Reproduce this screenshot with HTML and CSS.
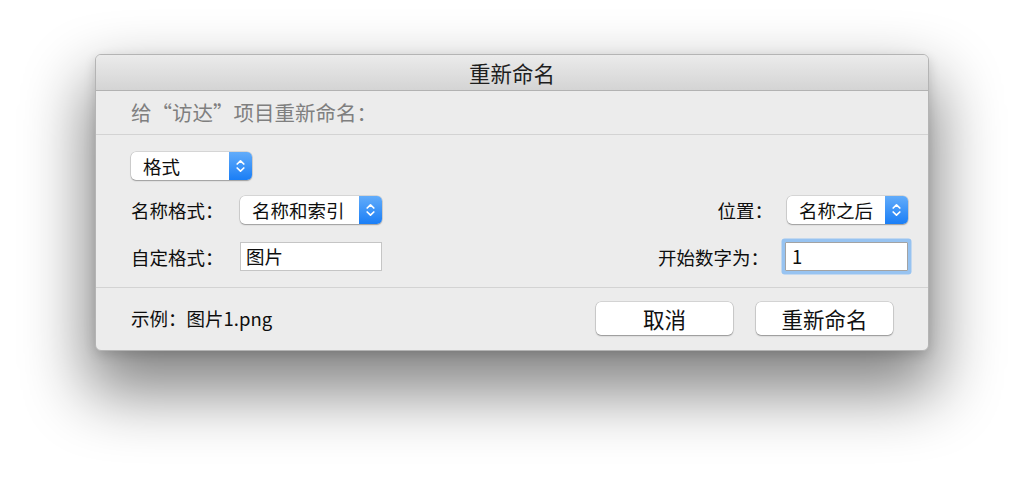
FILE: index.html
```html
<!DOCTYPE html>
<html lang="zh-CN">
<head>
<meta charset="utf-8">
<title>重新命名</title>
<link rel="stylesheet" href="styles.css">
</head>
<body>
<div class="window">
  <div class="titlebar">重新命名</div>
  <div class="header">给“访达”项目重新命名：</div>
  <div class="form">
    <div class="row">
      <div class="popup popup-format">
        <span class="popup-text">格式</span>
        <span class="popup-arrows"><svg width="9" height="14" viewBox="0 0 9 14"><path d="M1.2 5 L4.5 1.8 L7.8 5" /><path d="M1.2 9 L4.5 12.2 L7.8 9" /></svg></span>
      </div>
    </div>
    <div class="row split">
      <div class="group">
        <span class="label">名称格式：</span>
        <div class="popup popup-name">
          <span class="popup-text">名称和索引</span>
          <span class="popup-arrows"><svg width="9" height="14" viewBox="0 0 9 14"><path d="M1.2 5 L4.5 1.8 L7.8 5" /><path d="M1.2 9 L4.5 12.2 L7.8 9" /></svg></span>
        </div>
      </div>
      <div class="group right">
        <span class="label-r">位置：</span>
        <div class="popup popup-pos">
          <span class="popup-text">名称之后</span>
          <span class="popup-arrows"><svg width="9" height="14" viewBox="0 0 9 14"><path d="M1.2 5 L4.5 1.8 L7.8 5" /><path d="M1.2 9 L4.5 12.2 L7.8 9" /></svg></span>
        </div>
      </div>
    </div>
    <div class="row split">
      <div class="group">
        <span class="label">自定格式：</span>
        <div class="field field-custom">图片</div>
      </div>
      <div class="group right">
        <span class="label-r label-start">开始数字为：</span>
        <div class="field field-start focused">1</div>
      </div>
    </div>
  </div>
  <div class="footer">
    <span class="example">示例：图片1.png</span>
    <div class="buttons">
      <div class="btn">取消</div>
      <div class="btn">重新命名</div>
    </div>
  </div>
</div>
</body>
</html>
```

FILE: styles.css
```css
html, body {
  margin: 0;
  padding: 0;
  background: #ffffff;
}
body {
  width: 1024px;
  height: 487px;
  overflow: hidden;
  font-family: "Noto Sans CJK SC", "Noto Sans", sans-serif;
  font-weight: 400;
  color: #0e0e0e;
}
.window {
  margin: 54px 0 0 95px;
  width: 834px;
  height: 297px;
  box-sizing: border-box;
  background: #ececec;
  border-radius: 6px;
  border: 1px solid #b4b4b4;
  box-shadow: 0 34px 64px 8px rgba(0, 0, 0, 0.48), 0 4px 12px rgba(0,0,0,0.14);
  display: flex;
  flex-direction: column;
  overflow: hidden;
}
.titlebar {
  height: 36px;
  box-sizing: border-box;
  background: linear-gradient(#ebebeb, #d4d4d4);
  border-bottom: 1px solid #b2b2b2;
  text-align: center;
  font-size: 21.5px;
  line-height: 36px;
  color: #1e1e1e;
}
.header {
  height: 44px;
  box-sizing: border-box;
  border-bottom: 1px solid #d3d3d3;
  padding-left: 35px;
  font-size: 20.5px;
  line-height: 42px;
  color: #7f7f7f;
}
.form {
  height: 153px;
  box-sizing: border-box;
  border-bottom: 1px solid #d3d3d3;
  padding: 17px 20px 0 35px;
  display: flex;
  flex-direction: column;
  gap: 16px;
}
.row {
  display: flex;
  align-items: center;
}
.row.split {
  justify-content: space-between;
}
.row.split + .row.split {
  margin-top: 2px;
}
.group {
  display: flex;
  align-items: center;
}
.label {
  width: 109px;
  font-size: 18.5px;
}
.label-r {
  font-size: 18.5px;
  margin-right: 14px;
}
.label-start {
  margin-right: 16px;
}
.popup {
  height: 28px;
  box-sizing: border-box;
  background: #ffffff;
  border-radius: 5px;
  box-shadow: 0 0 0 0.5px rgba(0,0,0,0.18), 0 1px 1.5px rgba(0,0,0,0.28);
  display: flex;
  align-items: stretch;
  overflow: hidden;
  font-size: 18.5px;
}
.popup-text {
  flex: 1;
  padding-left: 12px;
  line-height: 28px;
}
.popup-arrows {
  width: 23px;
  background: linear-gradient(#62acfa, #1a7ef6);
  display: flex;
  align-items: center;
  justify-content: center;
}
.popup-arrows svg path {
  fill: none;
  stroke: #ffffff;
  stroke-width: 1.7;
  stroke-linecap: round;
  stroke-linejoin: round;
}
.popup-format { width: 121px; }
.popup-name { width: 142px; }
.popup-pos { width: 121px; }
.field {
  height: 29px;
  box-sizing: border-box;
  background: #ffffff;
  border: 1px solid #c5c5c5;
  font-size: 18.5px;
  line-height: 27px;
  padding-left: 5px;
}
.field-custom { width: 142px; }
.field-start {
  width: 123px;
  margin-right: 0;
  border-color: #a3a3a3;
  padding-left: 6px;
}
.focused {
  box-shadow: 0 0 0 3.5px #97c3f1;
  border-radius: 1px;
}
.footer {
  flex: 1;
  display: flex;
  align-items: center;
  justify-content: space-between;
  padding: 0 35px 2px 35px;
}
.example {
  font-size: 18.5px;
}
.buttons {
  display: flex;
  gap: 23px;
}
.btn {
  width: 137px;
  height: 33px;
  box-sizing: border-box;
  background: #ffffff;
  border-radius: 5px;
  box-shadow: 0 0 0 0.5px rgba(0,0,0,0.2), 0 1px 1.5px rgba(0,0,0,0.3);
  text-align: center;
  font-size: 21.5px;
  line-height: 33px;
  color: #111111;
}
```
